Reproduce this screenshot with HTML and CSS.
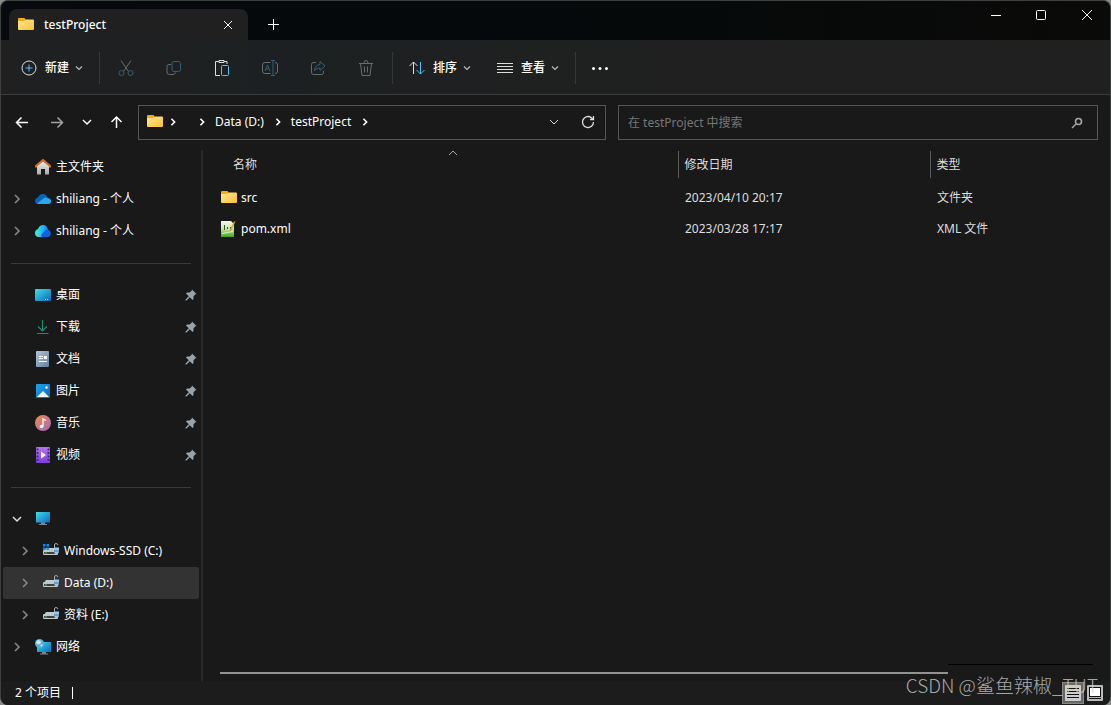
FILE: index.html
```
<!DOCTYPE html>
<html lang="zh-CN">
<head>
  <meta charset="UTF-8" />
  <meta name="viewport" content="width=device-width, initial-scale=1.0"/>
  <title>testProject</title>
  <link rel="stylesheet" href="styles.css">
</head>
<body>
  <!-- shared icons -->
  <svg class="sprite" aria-hidden="true">
    <defs>
      <linearGradient id="g-folder" x1="0" y1="0" x2="1" y2="1"><stop offset="0" stop-color="#ffe49a"/><stop offset="1" stop-color="#fcc32f"/></linearGradient>
      <linearGradient id="g-screen" x1="0" y1="0" x2="1" y2="1"><stop offset="0" stop-color="#3fdde5"/><stop offset="1" stop-color="#0b69c4"/></linearGradient>
      <linearGradient id="g-home" x1="0" y1="0" x2="0" y2="1"><stop offset="0" stop-color="#f0f0f0"/><stop offset="1" stop-color="#aaa"/></linearGradient>
      <linearGradient id="g-cloud" x1="0" y1="0" x2="1" y2="0"><stop offset="0" stop-color="#54f2b4"/><stop offset=".5" stop-color="#22b4fb"/><stop offset="1" stop-color="#1478ef"/></linearGradient>
      <linearGradient id="g-doc" x1="0" y1="0" x2="1" y2="1"><stop offset="0" stop-color="#b3c5d8"/><stop offset="1" stop-color="#62809d"/></linearGradient>
      <linearGradient id="g-pic" x1="0" y1="0" x2="1" y2="1"><stop offset="0" stop-color="#20a5e8"/><stop offset="1" stop-color="#0569c4"/></linearGradient>
      <linearGradient id="g-music" x1="0" y1="0" x2="1" y2="1"><stop offset="0" stop-color="#f08a4b"/><stop offset="1" stop-color="#a568b8"/></linearGradient>
      <linearGradient id="g-video" x1="0" y1="0" x2="0" y2="1"><stop offset="0" stop-color="#b574f0"/><stop offset="1" stop-color="#7d3fd8"/></linearGradient>
      <linearGradient id="g-xml" x1="0" y1="0" x2="0" y2="1"><stop offset="0" stop-color="#f4f7f4"/><stop offset=".5" stop-color="#c5e6a8"/><stop offset="1" stop-color="#42a51b"/></linearGradient>
    </defs>
    <symbol id="folder" viewBox="0 0 16 16">
      <path d="M1 1h5.500l1.500 2v4H0V2q0-1 1-1z" fill="#f5ad0b"/>
      <path d="M0 4h6l2-1.500h7q1 0 1 1V12q0 1-1 1H1q-1 0-1-1z" fill="url(#g-folder)"/>
    </symbol>
    <symbol id="down" viewBox="0 0 10 10"><path d="M1 3l4 4 4-4" fill="none" stroke="currentColor"/></symbol>
    <symbol id="down-small" viewBox="0 0 10 10"><path d="M2 3.500l3 3 3-3" fill="none" stroke="currentColor" stroke-width="1.200"/></symbol>
    <symbol id="right" viewBox="0 0 10 10"><path d="M3 1l4 4-4 4" fill="none" stroke="currentColor"/></symbol>
    <symbol id="pin" viewBox="0 0 12 12"><path d="M7 0.500L11.500 5 10 5.500 8.500 7.500 8.500 10 7.500 11 4.800 8.200 1.500 11.500 0.500 11.500 0.500 10.500 3.800 7.200 1 4.500 2 3.500 4.500 3.500 6.500 2z" fill="#98a3ac"/></symbol>
    <symbol id="drive" viewBox="0 0 16 16">
      <path d="M3 5h8l4 3H1z" fill="#c9c9c9"/>
      <path d="M1 7h13q1 0 1 1v3q0 1-1 1H1q-1 0-1-1V8q0-1 1-1z" fill="#c4c7c8"/>
      <path d="M1 9h11v2H1z" fill="#3e4446"/>
      <path d="M2 10h2" stroke="#31d843"/>
      <path d="M11.500 5V2q0-1.500 1.500-1.500t2 1.500" fill="none" stroke="#a5abae"/>
      <path d="M11 4.500h5v4q0 2-2.500 3Q11 10.500 11 8.500z" fill="#a9c4d6"/>
      <path d="M11 7h5v2h-5z" fill="#5f9fd2"/>
    </symbol>
    <symbol id="monitor" viewBox="0 0 16 16">
      <path d="M6 11h4v2h2v1H4v-1h2z" fill="#7a868e"/>
      <rect x="1" y="1" width="14" height="10.500" fill="url(#g-screen)"/>
    </symbol>
  </svg>

  <div class="window">
    <header class="titlebar">
      <div class="tab">
        <svg class="icon"><use href="#folder"/></svg>
        <span class="tab-name">testProject</span>
        <button class="tab-close" aria-label="关闭标签页"><svg viewBox="0 0 10 10"><path d="M1 1l8 8M9 1L1 9"/></svg></button>
      </div>
      <button class="tab-add" aria-label="新标签页"><svg viewBox="0 0 12 12"><path d="M6.500 0v11M1 5.500h11"/></svg></button>
      <div class="window-buttons">
        <button aria-label="最小化"><svg viewBox="0 0 12 12"><path d="M2 6.500h10"/></svg></button>
        <button aria-label="最大化"><svg viewBox="0 0 12 12"><rect x="1.500" y="1.500" width="9" height="9" rx="1"/></svg></button>
        <button aria-label="关闭"><svg viewBox="0 0 12 12"><path d="M1 1l10 10M11 1L1 11"/></svg></button>
      </div>
    </header>

    <div class="toolbar">
      <button class="command command-new">
        <svg class="icon" viewBox="0 0 16 16"><circle cx="8" cy="8" r="7"/><path class="blue" d="M8 4.500v7M4.500 8h7"/></svg>
        新建
        <svg class="arrow"><use href="#down-small"/></svg>
      </button>
      <span class="divider"></span>
      <div class="tools">
        <button class="tool off" aria-label="剪切"><svg class="icon" viewBox="0 0 16 16"><path d="M3 0.500l7.500 11M13 0.500L5.500 11.500"/><circle class="blue" cx="3.500" cy="13" r="2.500"/><circle class="blue" cx="12.500" cy="13" r="2.500"/></svg></button>
        <button class="tool off" aria-label="复制"><svg class="icon" viewBox="0 0 16 16"><path d="M5 4.500H3q-2 0-2 2V12q0 2.500 2.500 2.500H7q2 0 2.500-2"/><rect class="blue" x="6" y="1.500" width="8.500" height="10" rx="2"/></svg></button>
        <button class="tool" aria-label="粘贴"><svg class="icon" viewBox="0 0 16 16"><path d="M5 1.500H1.500v14H6M10 1.500h3V4M5 0.500h5v2H5z"/><rect class="blue" x="7.500" y="5.500" width="7" height="10" rx="1"/></svg></button>
        <button class="tool off" aria-label="重命名"><svg class="icon" viewBox="0 0 16 16"><path d="M8.500 2.500H3Q.500 2.500.500 5v6q0 2.500 2.500 2.500h5.500M13 2.500q2.500 0 2.500 2.500v6q0 2.500-2.500 2.500"/><path class="blue" d="M3 11l2.500-6L8 11M4 9h3M11 1v14M9 .500h4M9 15.500h4"/></svg></button>
        <button class="tool off" aria-label="共享"><svg class="icon" viewBox="0 0 16 16"><path d="M6 2.500H3.500q-2 0-2 2v8q0 2 2 2h8q2 0 2-2V11"/><path class="blue" d="M10 1.500L15 6l-5 4.500V8Q6.500 8 4.500 10.500 5 5 10 4.500z"/></svg></button>
        <button class="tool off" aria-label="删除"><svg class="icon" viewBox="0 0 16 16"><path d="M1 3.500h14M2.500 3.500l1.500 12h8l1.500-12M6 3q0-2.500 2-2.500T10 3M6.500 6.500v6M9.500 6.500v6"/></svg></button>
      </div>
      <span class="divider"></span>
      <button class="command">
        <svg class="icon" viewBox="0 0 16 16"><path d="M4.500 14V2M.500 6l4-4 4 4"/><path class="blue" d="M11.500 2v12M7.500 10l4 4 4-4"/></svg>
        排序
        <svg class="arrow"><use href="#down-small"/></svg>
      </button>
      <button class="command command-view">
        <svg class="icon" viewBox="0 0 16 16"><path d="M0 3.500h16M0 6.500h16M0 9.500h16M0 12.500h16"/></svg>
        查看
        <svg class="arrow"><use href="#down-small"/></svg>
      </button>
      <span class="divider"></span>
      <button class="more" aria-label="查看更多"><svg class="icon" viewBox="0 0 16 16"><circle cx="1.500" cy="8.500" r="1.500"/><circle cx="8" cy="8.500" r="1.500"/><circle cx="14.500" cy="8.500" r="1.500"/></svg></button>
    </div>

    <div class="navbar">
      <button class="nav-btn" aria-label="返回"><svg class="icon" viewBox="0 0 16 16"><path d="M14 7.500H2.500M7.500 2.500l-5 5 5 5"/></svg></button>
      <button class="nav-btn dim" aria-label="前进"><svg class="icon" viewBox="0 0 16 16"><path d="M2 7.500h11.500M8.500 2.500l5 5-5 5"/></svg></button>
      <button class="nav-btn recent" aria-label="最近浏览的位置"><svg class="icon" viewBox="0 0 16 16"><path d="M4 5l4 4 4-4"/></svg></button>
      <button class="nav-btn" aria-label="上移"><svg class="icon" viewBox="0 0 16 16"><path d="M7.500 13V2M2.500 7l5-5 5 5"/></svg></button>
      <nav class="address">
        <svg class="icon"><use href="#folder"/></svg>
        <svg class="crumb-arrow root"><use href="#right"/></svg>
        <svg class="crumb-arrow"><use href="#right"/></svg>
        <a href="#">Data (D:)</a>
        <svg class="crumb-arrow"><use href="#right"/></svg>
        <a href="#">testProject</a>
        <svg class="crumb-arrow"><use href="#right"/></svg>
        <button class="history" aria-label="以前的位置"><svg viewBox="0 0 10 10"><path d="M1 3l4 4 4-4"/></svg></button>
        <button class="refresh" aria-label="刷新"><svg viewBox="0 0 14 14"><path d="M12.500 7A5.500 5.500 0 1 1 10.500 2.800L12.300 4.500M12.500 1v3.500H9"/></svg></button>
      </nav>
      <form class="search">
        <input type="text" placeholder="在 testProject 中搜索" aria-label="在 testProject 中搜索" />
        <svg viewBox="0 0 12 12"><circle cx="7.500" cy="4.500" r="3"/><path d="M5 7L1 11"/></svg>
      </form>
    </div>

    <main>
      <aside class="sidebar">
        <ul>
          <li><a href="#"><span class="toggle"></span>
            <svg class="icon" viewBox="0 0 16 16"><path d="M2 7l6-5 6 5v8.500h-4V10H6v5.500H2z" fill="url(#g-home)"/><path d="M1 8.500V7l7-6 7 6v1.500" fill="none" stroke="#df6b23" stroke-width="2"/></svg>
            主文件夹</a></li>
          <li><a href="#"><svg class="toggle"><use href="#right"/></svg>
            <svg class="icon" viewBox="0 0 16 16"><path d="M0 10q0-3 3-3.500Q4.500 3 8 3q3.500 0 4.500 3.500Q16 7 16 10q0 3-3 3H3q-3 0-3-3z" fill="#0764b8"/><path d="M2 12.500L9 7q2.500-1 4 .500 3 .500 3 2.500 0 3-3 3H3z" fill="#28a8ea"/></svg>
            shiliang - 个人</a></li>
          <li><a href="#"><svg class="toggle"><use href="#right"/></svg>
            <svg class="icon" viewBox="0 0 16 16"><path d="M0 10q0-3 3-4Q4.500 2 8 2q4 0 5 5 2.500.500 2.500 3.500T12 14H4q-4 0-4-4z" fill="url(#g-cloud)"/><path d="M6 12l5-5.500q4.500.500 4.500 4 0 3.500-3.500 3.500H7z" fill="#1261e4"/></svg>
            shiliang - 个人</a></li>
        </ul>
        <hr>
        <ul>
          <li><a href="#"><span class="toggle"></span>
            <svg class="icon" viewBox="0 0 16 16"><rect x="0" y="2" width="16" height="12" rx="1" fill="url(#g-screen)"/><path d="M10 12.500h4" stroke="#9edcff" stroke-dasharray="1 1"/></svg>
            桌面<svg class="pin"><use href="#pin"/></svg></a></li>
          <li><a href="#"><span class="toggle"></span>
            <svg class="icon" viewBox="0 0 16 16"><path d="M7.500 1v11M3 7.500L7.500 12 12 7.500M2 14.500h11.500" fill="none" stroke="#188e76" stroke-width="1.200"/></svg>
            下载<svg class="pin"><use href="#pin"/></svg></a></li>
          <li><a href="#"><span class="toggle"></span>
            <svg class="icon" viewBox="0 0 16 16"><rect x="1" y="0" width="13" height="16" rx="1" fill="url(#g-doc)"/><path d="M4 5.500h4M4 7.500h4M4 10.500h8" stroke="#fff"/><path d="M9 5h3v3H9z" fill="#fff"/></svg>
            文档<svg class="pin"><use href="#pin"/></svg></a></li>
          <li><a href="#"><span class="toggle"></span>
            <svg class="icon" viewBox="0 0 16 16"><rect x="1" y="1" width="14" height="14" rx="1" fill="url(#g-pic)"/><path d="M2 14l6-6 6 6z" fill="#f5faff"/><circle cx="11.500" cy="4.500" r="1.300" fill="#fff"/></svg>
            图片<svg class="pin"><use href="#pin"/></svg></a></li>
          <li><a href="#"><span class="toggle"></span>
            <svg class="icon" viewBox="0 0 16 16"><circle cx="8" cy="8" r="8" fill="url(#g-music)"/><path d="M8 11.500V4l3 1.500" fill="none" stroke="#fff" stroke-width="1.300"/><circle cx="6.500" cy="11.500" r="1.800" fill="#fff"/></svg>
            音乐<svg class="pin"><use href="#pin"/></svg></a></li>
          <li><a href="#"><span class="toggle"></span>
            <svg class="icon" viewBox="0 0 16 16"><rect x="1" y="0" width="14" height="16" rx="1" fill="url(#g-video)"/><path d="M2.500 1.500v14M13.500 1.500v14" stroke="#4b2289" stroke-width="2" stroke-dasharray="2 1.500"/><path d="M6 4.500l5 3.500-5 3.500z" fill="#fff"/></svg>
            视频<svg class="pin"><use href="#pin"/></svg></a></li>
        </ul>
        <hr>
        <ul>
          <li><a href="#" aria-label="此电脑"><svg class="toggle open"><use href="#down"/></svg>
            <svg class="icon"><use href="#monitor"/></svg></a>
            <ul>
              <li><a href="#"><svg class="toggle"><use href="#right"/></svg>
                <svg class="icon" viewBox="0 0 16 16"><use href="#drive"/><path d="M0 1h2.500v2.500H0zM3.500 1H6v2.500H3.500zM0 4.500h2.500V7H0zM3.500 4.500H6V7H3.500z" fill="#0a90ea"/></svg>
                Windows-SSD (C:)</a></li>
              <li><a href="#" class="selected"><svg class="toggle"><use href="#right"/></svg>
                <svg class="icon"><use href="#drive"/></svg>
                Data (D:)</a></li>
              <li><a href="#"><svg class="toggle"><use href="#right"/></svg>
                <svg class="icon"><use href="#drive"/></svg>
                资料 (E:)</a></li>
            </ul>
          </li>
          <li><a href="#"><svg class="toggle"><use href="#right"/></svg>
            <svg class="icon" viewBox="0 0 16 16"><path d="M7 13h4v1.500h2v1H5v-1h2z" fill="#7a868e"/><rect x="2" y="3" width="14" height="10" fill="url(#g-screen)"/><circle cx="4.500" cy="4.500" r="4.500" fill="#5baed8"/><path d="M2 1.500q3-1 4 1T3 5.500L1 4zM5 6l3-1-1.500 3z" fill="#c8e9f5"/></svg>
            网络</a></li>
        </ul>
      </aside>

      <section class="files">
        <table>
          <thead>
            <tr>
              <th class="col-name">名称<svg class="sort" viewBox="0 0 10 10"><path d="M1 7l4-4 4 4"/></svg></th>
              <th class="col-date">修改日期</th>
              <th>类型</th>
            </tr>
          </thead>
          <tbody>
            <tr>
              <td><a href="#"><svg class="icon"><use href="#folder"/></svg>src</a></td>
              <td>2023/04/10 20:17</td>
              <td>文件夹</td>
            </tr>
            <tr>
              <td><a href="#"><svg class="icon" viewBox="0 0 16 16"><path d="M0 0h10l3 3v13H0z" fill="url(#g-xml)"/><path d="M3.500 4v5M6.500 6v2M9.500 6v2" stroke="#3d5540"/><path d="M14.500 0.500L10 10l-1.500 1.500V9.500L13 0.500z" fill="#e3a22c"/><path d="M1 12.500l11-2" stroke="#d9f6bd"/></svg>pom.xml</a></td>
              <td>2023/03/28 17:17</td>
              <td>XML 文件</td>
            </tr>
          </tbody>
        </table>
        <div class="scroll">
          <div class="scroll-thumb"></div>
          <div class="scroll-rest"></div>
        </div>
      </section>
    </main>

    <footer class="statusbar">
      <span class="count">2 个项目</span>
      <button class="view-btn active" aria-label="详细信息"><svg viewBox="0 0 16 16"><rect width="16" height="16" rx="1" fill="#ccc"/><path d="M2 3.500h12M2 6.500h12M2 9.500h12M2 12.500h12" stroke="#111"/></svg></button>
      <button class="view-btn" aria-label="大图标"><svg viewBox="0 0 16 16"><rect width="16" height="16" rx="1" fill="#bbb"/><rect x="2.500" y="2.500" width="11" height="9" fill="#fff" stroke="#111"/><path d="M2 13.500h12" stroke="#111"/></svg></button>
    </footer>
    <div class="watermark">CSDN @鲨鱼辣椒_TUT</div>
  </div>
</body>
</html>
```

FILE: styles.css
```
:root {
  --bg: #191919;
  --bar: #202021;
  --line: #555;
  --text: #fff;
  --muted: #8b8b8b;
  --accent: #4cc2ff;
}

* {
  box-sizing: border-box;
}

body {
  margin: 0;
  background-color: #8a8c8a;
  color: var(--text);
  font-family: "Noto Sans", "Noto Sans CJK SC", sans-serif;
  font-size: 12px;
  line-height: 16px;
}

button {
  display: flex;
  align-items: center;
  justify-content: center;
  flex-shrink: 0;
  padding: 0;
  border: none;
  background: none;
  color: inherit;
  font: inherit;
}

a {
  color: inherit;
  text-decoration: none;
}

ul {
  list-style: none;
  margin: 0;
  padding: 0;
}

svg {
  flex-shrink: 0;
}

.icon {
  width: 16px;
  height: 16px;
}

.sprite {
  position: absolute;
  width: 0;
  height: 0;
}

.window {
  position: relative;
  display: flex;
  flex-direction: column;
  min-height: 100vh;
  border: 1px solid #3e4040;
  border-bottom: none;
  border-radius: 8px;
  background-color: var(--bg);
  overflow: hidden;
}

/* title bar */
.titlebar {
  display: flex;
  height: 39px;
  padding-left: 8px;
  background: linear-gradient(90deg, #06090d, #05090b 50%, #0a0a08);
}

.tab {
  display: flex;
  align-items: center;
  width: 239px;
  margin-top: 8px;
  padding: 0 12px 0 9px;
  border-radius: 8px 8px 0 0;
  background-color: var(--bar);
}

.tab-name {
  flex: 1;
  margin-left: 10px;
  font-weight: 500;
}

.titlebar svg {
  fill: none;
  stroke: #fff;
}

.tab svg.icon {
  stroke: none;
}

.tab-close {
  width: 16px;
  height: 16px;
}

.tab-close svg {
  width: 10px;
  height: 10px;
}

.tab-add {
  width: 32px;
  margin: 8px 0 0 9px;
}

.tab-add svg,
.window-buttons svg {
  width: 12px;
  height: 12px;
}

.window-buttons {
  display: flex;
  height: 28px;
  margin-left: auto;
}

.window-buttons button {
  width: 46px;
}

/* commands */
.toolbar {
  display: flex;
  align-items: center;
  height: 55px;
  padding: 1px 0 0 20px;
  border-bottom: 1px solid #3b3b3b;
  background: linear-gradient(90deg, var(--bar), #1d2022 25%, #202020 60%);
}

.toolbar svg {
  fill: none;
  stroke: #ddd;
}

.toolbar .blue {
  stroke: var(--accent);
}

.command {
  gap: 8px;
  font-weight: 500;
}

.toolbar .arrow {
  width: 10px;
  height: 10px;
  margin-left: -3px;
  color: #bbb;
}

.command-new {
  margin-right: 15px;
}

.command-view {
  margin: 0 15px 0 25px;
}

.divider {
  width: 1px;
  height: 32px;
  background-color: #363636;
}

.tools {
  display: flex;
  gap: 32px;
  margin: 0 18px;
}

.tool.off {
  opacity: 0.4;
}

.divider + .command {
  margin-left: 16px;
}

.more {
  margin-left: 16px;
}

.toolbar .more svg {
  fill: #fff;
  stroke: none;
}

/* navigation row */
.navbar {
  display: flex;
  align-items: center;
  height: 55px;
  padding: 0 12px 0 5px;
}

.nav-btn {
  width: 32px;
  height: 32px;
}

.nav-btn svg {
  fill: none;
  stroke: #fff;
  stroke-width: 1.5;
}

.nav-btn.dim {
  opacity: 0.6;
  margin-left: 3px;
}

.nav-btn.recent {
  width: 28px;
}

.address,
.search {
  display: flex;
  align-items: center;
  height: 35px;
  border: 1px solid var(--line);
}

.address {
  flex: 451 1 0;
  min-width: 0;
  margin: 0 12px 0 5px;
  padding: 0 7px 2px 8px;
}

.crumb-arrow {
  width: 8px;
  height: 8px;
  margin: 0 9px 0 10px;
  stroke-width: 2;
}

.crumb-arrow.root {
  margin: 0 11px 0 6px;
}

.address button {
  width: 20px;
  height: 20px;
}

.address .history {
  margin-left: auto;
}

.address .refresh {
  margin-left: 14px;
}

.address button svg {
  width: 10px;
  height: 10px;
  fill: none;
  stroke: #ddd;
}

.address .refresh svg {
  width: 14px;
  height: 14px;
  stroke-width: 1.3;
}

.search {
  flex: 455 1 0;
  min-width: 0;
  padding: 0 14px 0 9px;
}

.search input {
  flex: 1;
  min-width: 0;
  padding: 0;
  border: none;
  outline: none;
  background: none;
  color: var(--text);
  font: inherit;
}

.search input::placeholder {
  color: #777;
}

.search svg {
  width: 12px;
  height: 12px;
  fill: none;
  stroke: #aaa;
  stroke-width: 1.5;
}

/* body */
main {
  display: flex;
  flex: 1;
}

.sidebar {
  width: 202px;
  flex-shrink: 0;
  padding: 1px 2px 0 2px;
  border-right: 2px solid #2a2a2a;
}

.sidebar a {
  display: flex;
  align-items: center;
  height: 32px;
  padding: 0 2px 0 9px;
  gap: 5px;
}

.sidebar ul ul a {
  padding-left: 17px;
}

.sidebar a.selected {
  border-radius: 2px;
  background-color: #333;
}

.toggle {
  width: 10px;
  height: 10px;
  margin-right: 8px;
  color: var(--muted);
  stroke-width: 1.5;
}

.toggle.open {
  color: #ddd;
}

.pin {
  width: 12px;
  height: 12px;
  margin-left: auto;
}

.sidebar hr {
  height: 1px;
  margin: 16px 8px 15px 8px;
  border: none;
  background-color: #3a3a3a;
}

.files {
  display: flex;
  flex: 1;
  flex-direction: column;
  justify-content: space-between;
  min-width: 0;
  padding-top: 1px;
}

table {
  width: 100%;
  table-layout: fixed;
  border-collapse: collapse;
}

th,
td {
  padding: 0 7px;
  text-align: left;
  font-weight: normal;
  color: #dedede;
}

th {
  height: 27px;
  padding: 0 6px;
  border-left: 1px solid #5a5a5a;
}

td {
  height: 31px;
}

tbody::before {
  content: "";
  display: block;
  height: 4px;
}

.col-name {
  position: relative;
  width: 475px;
  padding-left: 30px;
  border-left: none;
}

.col-date {
  width: 252px;
}

.sort {
  position: absolute;
  top: -3px;
  left: 245px;
  width: 10px;
  height: 10px;
  fill: none;
  stroke: #aaa;
}

td:first-child {
  padding-left: 18px;
  color: var(--text);
}

td a {
  display: flex;
  align-items: center;
  gap: 4px;
}

.scroll {
  display: flex;
  height: 17px;
  margin: 0 17px;
}

.scroll-thumb {
  flex: 5;
  height: 2px;
  margin-top: 8px;
  background-color: #929292;
}

.scroll-rest {
  flex: 1;
  border-top: 1px solid #000;
}

/* status */
.statusbar {
  display: flex;
  align-items: center;
  height: 24px;
  padding: 0 4px 1px 14px;
  background-color: #1c1c1c;
}

.count {
  margin-right: auto;
  padding-right: 11px;
  border-right: 1px solid #fff;
  line-height: 12px;
}

.view-btn {
  width: 22px;
  height: 22px;
}

.view-btn.active {
  border: 1px solid #888;
  background-color: #666;
}

.view-btn svg {
  width: 16px;
  height: 16px;
}

.watermark {
  position: absolute;
  right: 12px;
  bottom: 8px;
  color: rgba(205, 205, 205, 0.8);
  font-family: "Noto Sans CJK SC", sans-serif;
  font-size: 19px;
  font-weight: 300;
  line-height: 24px;
  pointer-events: none;
}
```
